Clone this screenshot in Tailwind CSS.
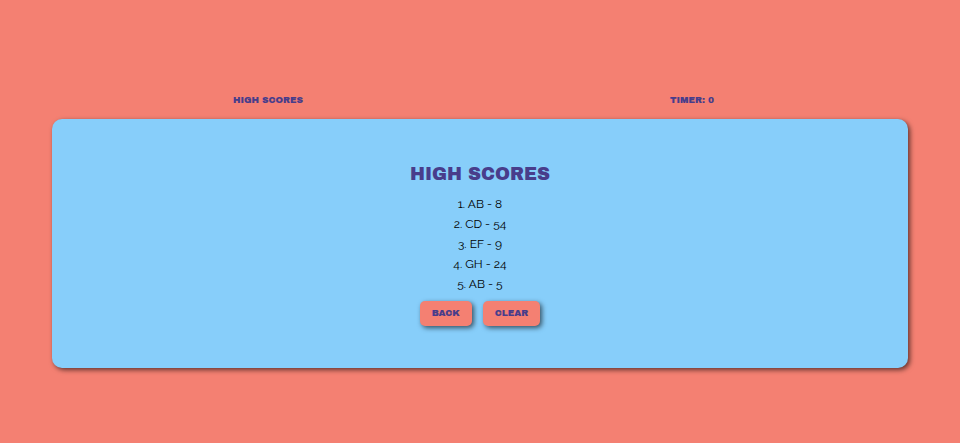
<!DOCTYPE html>
<html lang="en">
<head>
<meta charset="utf-8">
<meta name="viewport" content="width=device-width, initial-scale=1">
<title>High Scores</title>
<script src="https://cdn.jsdelivr.net/npm/@tailwindcss/browser@4"></script>
</head>
<body class="flex min-h-screen flex-col justify-center bg-[#f48072] px-[52px] font-['Raleway','Lato',sans-serif] text-black">
  <header class="grid grid-cols-2 px-1 pt-[18px] pb-3 text-center font-['Archivo_Black','Inter',sans-serif] text-[9px] leading-[14px] font-normal text-[#483d8b]">
    <a href="#scores">HIGH SCORES</a>
    <p>TIMER: 0</p>
  </header>
  <main id="scores" class="flex flex-col items-center rounded-[10px] bg-[#87cefa] pt-[43px] pb-[42px] shadow-[2px_2px_5px_rgba(0,0,0,0.6)]">
    <h1 class="font-['Archivo_Black','Inter',sans-serif] text-[18px] leading-6 font-normal text-[#483d8b]">HIGH SCORES</h1>
    <ol class="mt-2 text-center text-[12px] leading-5">
      <li>1. AB - 8</li>
      <li>2. CD - 54</li>
      <li>3. EF - 9</li>
      <li>4. GH - 24</li>
      <li>5. AB - 5</li>
    </ol>
    <div class="mt-[7px] flex gap-[11px] font-['Archivo_Black','Inter',sans-serif] text-[9px] leading-[15px] font-normal text-[#483d8b]">
      <button type="button" class="rounded-[5px] bg-[#f48072] px-3 py-[5px] shadow-[2px_2px_5px_rgba(0,0,0,0.6)]">BACK</button>
      <button type="button" class="rounded-[5px] bg-[#f48072] px-3 py-[5px] shadow-[2px_2px_5px_rgba(0,0,0,0.6)]">CLEAR</button>
    </div>
  </main>
</body>
</html>
